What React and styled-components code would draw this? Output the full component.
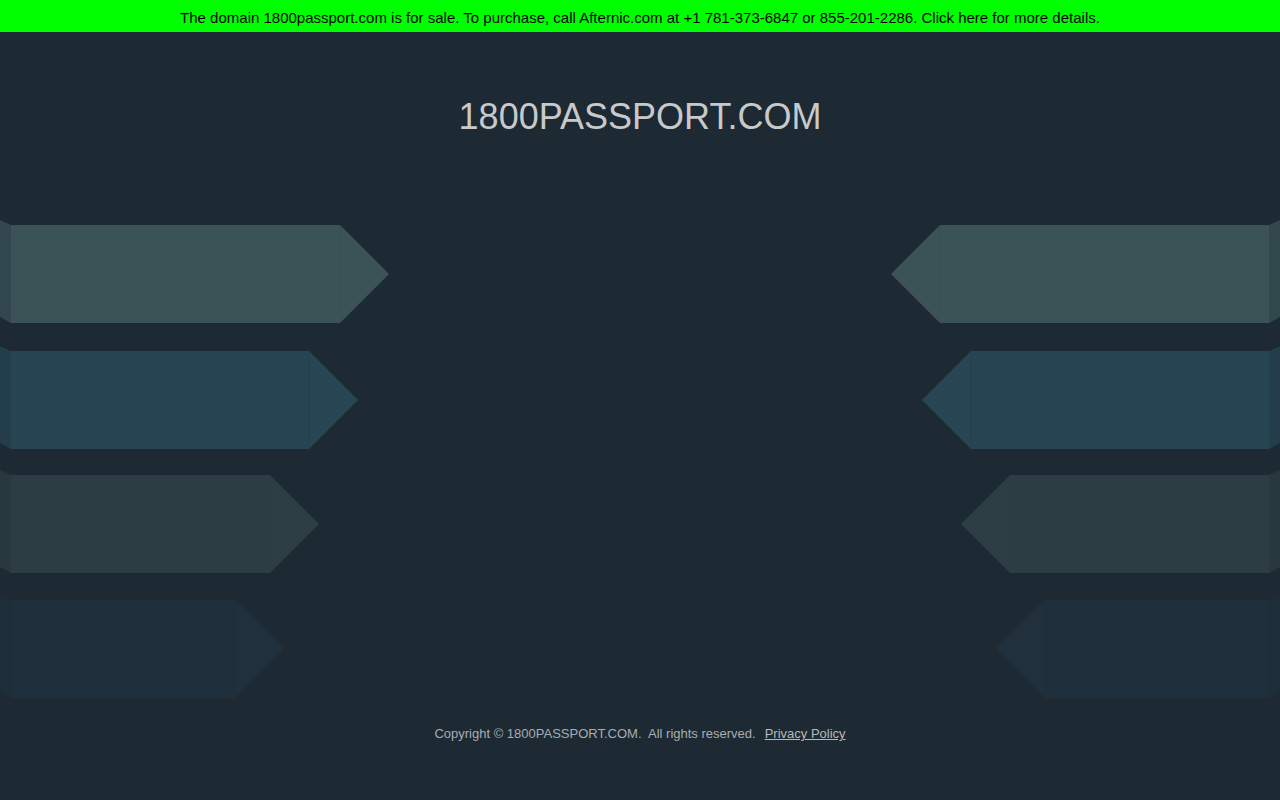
import React from "react";
import styled, { createGlobalStyle } from "styled-components";

const GlobalStyle = createGlobalStyle`
  html, body {
    margin: 0;
    padding: 0;
    background: #1d2a33;
  }
  body {
    font-family: "Liberation Sans", Arial, sans-serif;
  }
`;

const Page = styled.div`
  min-height: 100vh;
  display: flex;
  flex-direction: column;
  background: #1d2a33;
`;

const Banner = styled.a`
  display: flex;
  align-items: center;
  justify-content: center;
  box-sizing: border-box;
  height: 32px;
  padding-top: 2px;
  background: #00ff00;
  color: #000;
  font-size: 15px;
  text-decoration: none;
  cursor: pointer;
`;

const Title = styled.h1`
  margin: 64px 0 0;
  text-align: center;
  font-weight: normal;
  font-size: 36px;
  line-height: 42px;
  color: #c8c9ca;
`;

const Arrows = styled.div`
  display: flex;
  justify-content: space-between;
  margin-top: 82px;
`;

const Column = styled.div`
  display: flex;
  flex-direction: column;
  align-items: ${(p) => (p.$side === "right" ? "flex-end" : "flex-start")};
  gap: 22px;
`;

const ArrowSvg = styled.svg`
  display: block;
  margin-top: ${(p) => p.$shift}px;
  transform: ${(p) => (p.$side === "right" ? "scaleX(-1)" : "none")};
`;

const Footer = styled.footer`
  margin-top: 29px;
  text-align: center;
  font-size: 13px;
  line-height: 14px;
  color: #a7adb1;
`;

const Policy = styled.a`
  margin-left: 9px;
  color: #b4b9bc;
  text-decoration: underline;
  cursor: pointer;
`;

const rows = [
  { tip: 389, body: "#3b5257", fold: "#33484e", tipColor: "#3b5357", shift: 0 },
  { tip: 358, body: "#264452", fold: "#233d4a", tipColor: "#274553", shift: 1 },
  { tip: 319, body: "#2c3d43", fold: "#29383e", tipColor: "#2d3e44", shift: -1 },
  { tip: 284, body: "#1f303c", fold: "#1e2e39", tipColor: "#20313d", shift: 0 },
];

function Arrow({ tip, body, fold, tipColor, side, shift }) {
  const h = 103;
  const top = 5;
  const mid = top + 49;
  const start = tip - 49;
  return (
    <ArrowSvg $side={side} $shift={shift} width={tip + 1} height={h} viewBox={`0 0 ${tip + 1} ${h}`}>
      <polygon points={`0,0 11,${top} 11,${h} 0,${h - 6}`} fill={fold} />
      <rect x="11" y={top} width={start - 11} height={h - top} fill={body} />
      <polygon points={`${start},${top} ${tip},${mid} ${start},${h}`} fill={tipColor} />
      <line x1={start + 0.5} y1={top} x2={start + 0.5} y2={h} stroke="#000" strokeOpacity="0.06" />
    </ArrowSvg>
  );
}

export default function App() {
  return (
    <Page>
      <GlobalStyle />
      <Banner>
        The domain 1800passport.com is for sale. To purchase, call Afternic.com at +1 781-373-6847 or
        855-201-2286. Click here for more details.
      </Banner>
      <Title>1800PASSPORT.COM</Title>
      <Arrows>
        <Column $side="left">
          {rows.map((r, i) => (
            <Arrow key={i} {...r} side="left" />
          ))}
        </Column>
        <Column $side="right">
          {rows.map((r, i) => (
            <Arrow key={i} {...r} side="right" />
          ))}
        </Column>
      </Arrows>
      <Footer>
        Copyright © 1800PASSPORT.COM.&nbsp; All rights reserved.
        <Policy>Privacy Policy</Policy>
      </Footer>
    </Page>
  );
}
